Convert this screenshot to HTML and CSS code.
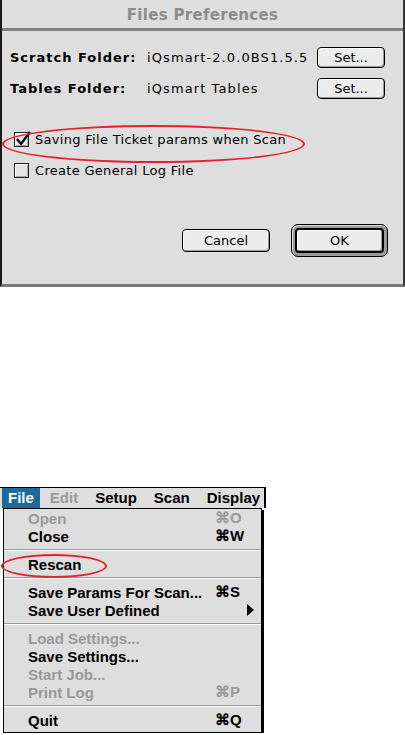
FILE: index.html
```html
<!DOCTYPE html>
<html lang="en">
<head>
    <meta charset="UTF-8">
    <title>Files Preferences</title>
    <link rel="stylesheet" href="styles.css">
</head>
<body>
    <div class="dialog">
        <div class="title">Files Preferences</div>
        <div class="folders">
            <div class="row">
                <span class="label">Scratch Folder:</span>
                <span class="value">iQsmart-2.0.0BS1.5.5</span>
                <span class="btn set">Set...</span>
            </div>
            <div class="row">
                <span class="label">Tables Folder:</span>
                <span class="value">iQsmart Tables</span>
                <span class="btn set">Set...</span>
            </div>
        </div>
        <div class="checks">
            <div class="check">
                <span class="box">
                    <svg class="tick" width="18" height="18" viewBox="0 0 18 18"><path d="M3 9 L7 14 L16 2" fill="none" stroke="#000" stroke-width="2.2"/></svg>
                </span>
                <span>Saving File Ticket params when Scan</span>
            </div>
            <div class="check">
                <span class="box"></span>
                <span>Create General Log File</span>
            </div>
        </div>
        <div class="actions">
            <span class="btn cancel">Cancel</span>
            <span class="ring"><span class="btn ok">OK</span></span>
        </div>
        <div class="oval oval-dialog"></div>
    </div>

    <div class="menu">
        <div class="menubar">
            <span class="mb-item active">File</span>
            <span class="mb-item off">Edit</span>
            <span class="mb-item">Setup</span>
            <span class="mb-item">Scan</span>
            <span class="mb-item">Display</span>
        </div>
        <div class="dropdown">
            <div class="item off"><span>Open</span><span class="key">&#8984;O</span></div>
            <div class="item"><span>Close</span><span class="key">&#8984;W</span></div>
            <div class="sep"></div>
            <div class="item"><span>Rescan</span></div>
            <div class="sep"></div>
            <div class="item"><span>Save Params For Scan...</span><span class="key">&#8984;S</span></div>
            <div class="item"><span>Save User Defined</span><span class="arrow"></span></div>
            <div class="sep"></div>
            <div class="item off"><span>Load Settings...</span></div>
            <div class="item"><span>Save Settings...</span></div>
            <div class="item off"><span>Start Job...</span></div>
            <div class="item off"><span>Print Log</span><span class="key">&#8984;P</span></div>
            <div class="sep"></div>
            <div class="item"><span>Quit</span><span class="key">&#8984;Q</span></div>
        </div>
        <div class="oval oval-menu"></div>
    </div>
</body>
</html>
```

FILE: styles.css
```css
body{
    margin: 0;
    background: #fff;
    font-family: "DejaVu Sans", sans-serif;
    color: #000;
}
.dialog{
    width: 401px;
    height: 284px;
    background: #dedede;
    border-left: 2px solid #1a1a1a;
    border-right: 2px solid #333;
    border-bottom: 3px solid #777;
    position: relative;
}
.title{
    height: 28px;
    line-height: 30px;
    border-bottom: 3px solid #808080;
    text-align: center;
    font-size: 15px;
    font-weight: bold;
    color: #8c8c8c;
    letter-spacing: 0.3px;
}
.folders{
    padding: 16px 18px 0 8px;
    display: flex;
    flex-direction: column;
    gap: 10px;
}
.row{
    display: flex;
    align-items: center;
    height: 21px;
    font-size: 13px;
}
.label{
    width: 137px;
    font-weight: bold;
    letter-spacing: 1px;
}
.value{
    flex: 1;
    letter-spacing: 1.1px;
}
.btn{
    display: flex;
    align-items: center;
    justify-content: center;
    box-sizing: border-box;
    border: 1px solid #000;
    border-radius: 4px;
    background: #ececec;
    box-shadow: inset -1px -1px 0 #999, inset 1px 1px 0 #fff;
    font-size: 13px;
}
.set{
    width: 68px;
    height: 21px;
}
.checks{
    padding: 33px 0 0 12px;
    display: flex;
    flex-direction: column;
    gap: 16px;
}
.check{
    display: flex;
    align-items: center;
    gap: 6px;
    height: 15px;
    font-size: 13px;
    letter-spacing: 0.3px;
}
.box{
    width: 15px;
    height: 15px;
    box-sizing: border-box;
    border: 1px solid #222;
    background: #e4e4e4;
    box-shadow: inset 1px 1px 0 #fff, inset -1px -1px 0 #aaa;
    position: relative;
}
.tick{
    position: absolute;
    left: -1px;
    top: -3px;
}
.actions{
    display: flex;
    justify-content: flex-end;
    align-items: center;
    gap: 21px;
    padding: 46px 15px 0 0;
}
.cancel{
    width: 88px;
    height: 23px;
}
.ring{
    width: 97px;
    height: 33px;
    box-sizing: border-box;
    border: 1px solid #000;
    border-radius: 7px;
    background: #9a9a9a;
    padding: 3px;
    box-shadow: inset 1px 1px 0 #ddd;
}
.ok{
    width: 100%;
    height: 100%;
    border-width: 2px;
}
.oval{
    position: absolute;
    border: 2px solid #e8202a;
    border-radius: 50%;
    box-sizing: border-box;
}
.oval-dialog{
    left: 0;
    top: 125px;
    width: 303px;
    height: 38px;
}

/* menu */
.menu{
    margin-top: 200px;
    width: 266px;
    position: relative;
    font-family: "Liberation Sans", sans-serif;
    font-weight: bold;
    font-size: 15px;
}
.menubar{
    height: 20px;
    background: #dedede;
    border-top: 1px solid #000;
    border-right: 2px solid #000;
    display: flex;
    align-items: center;
    padding-left: 2px;
}
.mb-item{
    height: 20px;
    line-height: 20px;
    padding: 0 6px;
    margin-right: 5px;
}
.mb-item.active{
    background: #1f6a9b;
    color: #fff;
    padding: 0 6px 0 6px;
    margin-right: 4px;
}
.off{
    color: #999;
}
.dropdown{
    margin-left: 3px;
    width: 257px;
    background: #dedede;
    border: 1px solid #000;
    box-shadow: 2px 2px 0 #000;
    padding: 0 0 3px;
}
.item{
    height: 18px;
    display: flex;
    align-items: center;
    padding-left: 24px;
    position: relative;
}
.item.off{
    color: #999;
}
.key{
    position: absolute;
    left: 211px;
}
.arrow{
    position: absolute;
    left: 243px;
    width: 0;
    height: 0;
    border-top: 6px solid transparent;
    border-bottom: 6px solid transparent;
    border-left: 7px solid #000;
}
.sep{
    height: 1px;
    background: #999;
    border-bottom: 1px solid #fff;
    margin: 4px 0 4px;
}
.oval-menu{
    left: 1px;
    top: 67px;
    width: 106px;
    height: 24px;
}
```
